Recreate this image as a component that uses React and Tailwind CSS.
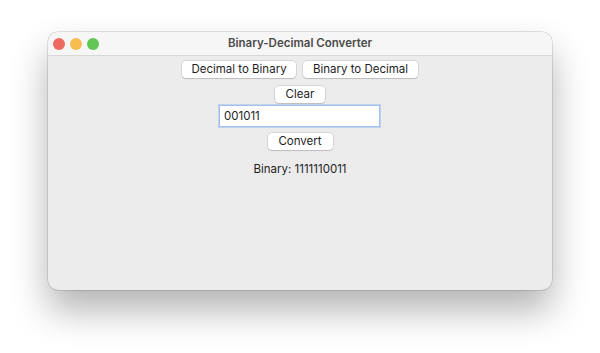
import React, { useState } from "react";

const Btn = ({ children, className = "" }) => (
  <button
    className={`h-[17px] rounded-[4px] bg-white text-[11.5px] leading-[17px] text-[#1e1e1e] shadow-[0_0_0_0.5px_rgba(0,0,0,0.18),0_1px_1px_rgba(0,0,0,0.12)] ${className}`}
  >
    {children}
  </button>
);

export default function App() {
  const [value, setValue] = useState("001011");

  return (
    <div
      className="w-[600px] h-[353px] bg-white pt-[32px] pl-[48px] [font-variant-numeric:proportional-nums]"
      style={{ fontFamily: 'Inter, Roboto, "Liberation Sans", Arial, sans-serif' }}
    >
      <div className="w-[504px] h-[258px] rounded-[10px] bg-[#ececec] overflow-hidden flex flex-col shadow-[0_0_0_0.5px_rgba(0,0,0,0.22),0_20px_36px_rgba(0,0,0,0.3)]">
        {/* title bar */}
        <div className="relative h-[24px] bg-[#f6f6f6] border-b border-[#d8d8d8] flex items-center justify-center">
          <div className="absolute left-[5px] top-[6px] flex gap-[5px]">
            <span className="w-[12px] h-[12px] rounded-full bg-[#ee6a5f]" />
            <span className="w-[12px] h-[12px] rounded-full bg-[#f5be4f]" />
            <span className="w-[12px] h-[12px] rounded-full bg-[#62c655]" />
          </div>
          <span className="text-[11.5px] font-semibold text-[#4a4a4a]">Binary-Decimal Converter</span>
        </div>

        {/* content */}
        <div className="flex flex-col items-center pt-[5px]">
          <div className="flex gap-[7px]">
            <Btn className="w-[114px]">Decimal to Binary</Btn>
            <Btn className="w-[115px]">Binary to Decimal</Btn>
          </div>
          <Btn className="w-[50px] mt-[8px]">Clear</Btn>
          <input
            value={value}
            onChange={(e) => setValue(e.target.value)}
            className="mt-[2px] ml-[-1px] w-[161px] h-[22px] bg-white px-[4px] text-[11.5px] text-[#1e1e1e] outline-none border border-[#9fbfee] shadow-[0_0_0_1px_rgba(120,165,235,0.35)]"
          />
          <Btn className="w-[65px] mt-[6px]">Convert</Btn>
          <p className="mt-[11px] text-[11.5px] text-[#1e1e1e]">Binary: 1111110011</p>
        </div>
      </div>
    </div>
  );
}
